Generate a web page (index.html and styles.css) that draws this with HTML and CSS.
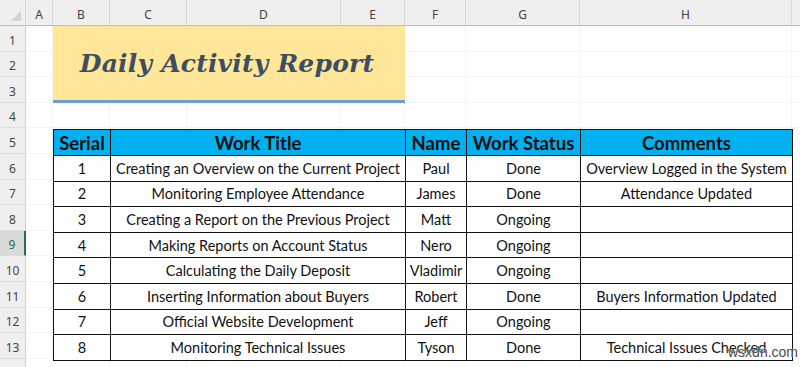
FILE: index.html
```html
<!DOCTYPE html>
<html>
<head>
<meta charset="utf-8">
<link rel="stylesheet" href="styles.css">
</head>
<body>
<div class="sheet">
  <div class="corner"><span class="tri"></span></div>
  <div class="colbar">
    <div class="colhead">A</div>
    <div class="colhead">B</div>
    <div class="colhead">C</div>
    <div class="colhead">D</div>
    <div class="colhead">E</div>
    <div class="colhead">F</div>
    <div class="colhead">G</div>
    <div class="colhead">H</div>
    <div class="colhead last"></div>
  </div>
  <div class="rowbar">
    <div class="rowhead">1</div>
    <div class="rowhead">2</div>
    <div class="rowhead">3</div>
    <div class="rowhead">4</div>
    <div class="rowhead">5</div>
    <div class="rowhead">6</div>
    <div class="rowhead">7</div>
    <div class="rowhead">8</div>
    <div class="rowhead active">9</div>
    <div class="rowhead">10</div>
    <div class="rowhead">11</div>
    <div class="rowhead">12</div>
    <div class="rowhead">13</div>
    <div class="rowhead"></div>
  </div>
  <div class="body">
    <div class="vl c1"></div>
    <div class="vl c2"></div>
    <div class="vl c3"></div>
    <div class="vl c4"></div>
    <div class="vl c5"></div>
    <div class="vl c6"></div>
    <div class="vl c7"></div>
    <div class="vl c8"></div>
    <div class="title"><span>Daily Activity Report</span></div>
    <table class="report">
      <colgroup>
        <col class="w-serial"><col class="w-title"><col class="w-name"><col class="w-status"><col class="w-comm">
      </colgroup>
      <tr class="head"><th>Serial</th><th>Work Title</th><th>Name</th><th>Work Status</th><th>Comments</th></tr>
      <tr><td>1</td><td>Creating an Overview on the Current Project</td><td>Paul</td><td>Done</td><td>Overview Logged in the System</td></tr>
      <tr><td>2</td><td>Monitoring Employee Attendance</td><td>James</td><td>Done</td><td>Attendance Updated</td></tr>
      <tr><td>3</td><td>Creating a Report on the Previous Project</td><td>Matt</td><td>Ongoing</td><td></td></tr>
      <tr><td>4</td><td>Making Reports on Account Status</td><td>Nero</td><td>Ongoing</td><td></td></tr>
      <tr><td>5</td><td>Calculating the Daily Deposit</td><td>Vladimir</td><td>Ongoing</td><td></td></tr>
      <tr><td>6</td><td>Inserting Information about Buyers</td><td>Robert</td><td>Done</td><td>Buyers Information Updated</td></tr>
      <tr><td>7</td><td>Official Website Development</td><td>Jeff</td><td>Ongoing</td><td></td></tr>
      <tr><td>8</td><td>Monitoring Technical Issues</td><td>Tyson</td><td>Done</td><td>Technical Issues Checked</td></tr>
    </table>
  </div>
  <div class="watermark">wsxdn.com</div>
</div>
</body>
</html>
```
FILE: styles.css
```css
* { box-sizing: border-box; }
html, body { margin: 0; padding: 0; background: #fff; }
body { width: 800px; height: 367px; overflow: hidden; }

.sheet {
  position: relative;
  display: grid;
  grid-template-columns: 26px 1fr;
  grid-template-rows: 26px 1fr;
  width: 800px;
  height: 367px;
  font-family: "Noto Sans", sans-serif;
}

.corner {
  background: #efefef;
  border-right: 1px solid #d6d6d6;
  border-bottom: 1px solid #bdbdbd;
  position: relative;
}
.tri {
  position: absolute;
  right: 4px;
  bottom: 4px;
  width: 0;
  height: 0;
  border-left: 10px solid transparent;
  border-bottom: 10px solid #d2d2d2;
}

.colbar {
  display: grid;
  grid-template-columns: 27px 57px 77px 154px 64px 61px 114px 212px 1fr;
  background: #efefef;
  border-bottom: 1px solid #bdbdbd;
}
.colhead {
  display: flex;
  align-items: center;
  justify-content: center;
  padding-top: 3px;
  font-size: 12px;
  color: #444;
  border-right: 1px solid #d9d9d9;
}
.colhead.last { border-right: none; }

.rowbar {
  display: flex;
  flex-direction: column;
  background: #efefef;
  border-right: 1px solid #d0d0d0;
}
.rowhead {
  height: 25.6px;
  flex: none;
  display: flex;
  align-items: flex-end;
  justify-content: center;
  padding-bottom: 2px;
  font-size: 12px;
  color: #444;
  border-bottom: 1px solid #dedede;
}
.rowhead.active {
  background: #dadada;
  color: #1e6e42;
  border-right: 2px solid #217346;
  margin-right: -1px;
}

.body {
  display: grid;
  grid-template-columns: 27px 57px 77px 154px 64px 61px 114px 212px 1fr;
  grid-template-rows: repeat(14, 25.6px);
  background: repeating-linear-gradient(to bottom, transparent 0, transparent 24.6px, #f4f4f4 24.6px, #f4f4f4 25.6px);
}
.vl { grid-row: 1 / -1; border-right: 1px solid #f4f4f4; }
.c1 { grid-column: 1; } .c2 { grid-column: 2; } .c3 { grid-column: 3; } .c4 { grid-column: 4; }
.c5 { grid-column: 5; } .c6 { grid-column: 6; } .c7 { grid-column: 7; } .c8 { grid-column: 8; }

.title {
  grid-column: 2 / 6;
  grid-row: 1 / 4;
  background: #ffe699;
  border-bottom: 3px solid #6b9fd3;
  display: flex;
  align-items: center;
  justify-content: center;
  padding-top: 2px;
  padding-right: 4px;
  z-index: 1;
}
.title span {
  font-family: "DejaVu Serif", serif;
  font-weight: bold;
  font-style: italic;
  font-size: 25px;
  color: #3e4e61;
  letter-spacing: 0.2px;
}

.report {
  grid-column: 2 / 9;
  grid-row: 5 / 14;
  z-index: 1;
  border-collapse: collapse;
  table-layout: fixed;
  width: 739px;
  margin-top: 1px;
  background: #fff;
  font-family: "Lato", sans-serif;
  color: #111;
}
.w-serial { width: 57px; }
.w-title { width: 295px; }
.w-name { width: 61px; }
.w-status { width: 114px; }
.w-comm { width: 212px; }
.report td, .report th {
  border: 1px solid #111;
  height: 25.6px;
  padding: 0;
  text-align: center;
  white-space: nowrap;
  overflow: hidden;
}
.report td { font-size: 14.5px; }
.report th {
  background: #00b0f0;
  font-size: 18.5px;
  font-weight: bold;
  color: #0d0d0d;
}

.watermark {
  position: absolute;
  left: 728px;
  top: 344px;
  font-family: "Liberation Sans", sans-serif;
  font-size: 14px;
  color: #4a4a4a;
  z-index: 2;
  text-shadow: 0 0 2px #fff;
}
```
